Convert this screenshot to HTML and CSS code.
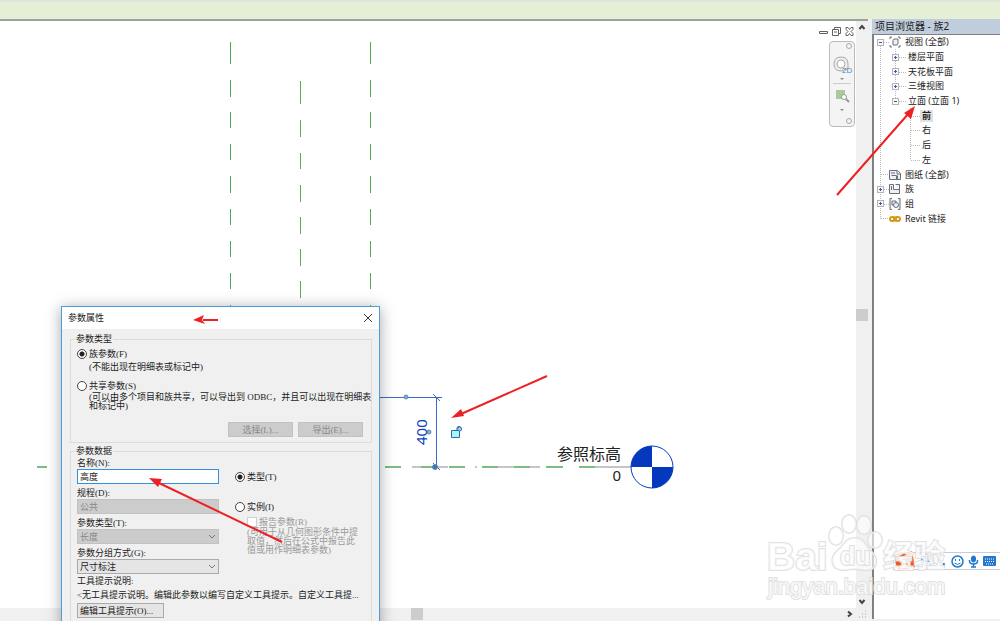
FILE: index.html
```html
<!DOCTYPE html>
<html lang="zh-CN">
<head>
<meta charset="utf-8">
<title>参数属性</title>
<link rel="stylesheet" href="styles.css">
</head>
<body>
<div class="app">
  <header class="ribbon"></header>
  <div class="main">
    <main class="workspace">
      <section class="canvas">
        <svg class="drawing" aria-label="前立面">
          <g class="ref-plane">
            <path d="M230.500 21v22M230.500 59v17M230.500 91v16M230.500 123v16M230.500 155v17M230.500 188v16M230.500 220v16M230.500 252v16M230.500 284v16"/>
            <path d="M370.500 21v22M370.500 59v17M370.500 91v16M370.500 123v16M370.500 155v17M370.500 188v16M370.500 220v16M370.500 252v16M370.500 284v16"/>
            <path d="M300.500 60v23M300.500 99v17M300.500 132v16M300.500 164v17M300.500 196v17M300.500 228v17M300.500 260v17"/>
          </g>
          <path d="M412 446h36M475 446h2M498 446h42M594 446h37" stroke="#8b8b8b"/>
          <path d="M37 446h10M385 446h16M421 446h12M449 446h16M482 446h16M514 446h16M546 446h17M579 446h16" stroke="#7dbb80" stroke-width="2"/>
          <g stroke="#3f68cc" fill="none">
            <path d="M380 376.500h62M436.500 376v72M433 373l7 7M433 442l7 7"/>
            <g fill="#83abe0" stroke="#6387b4"><circle cx="406" cy="376" r="2"/><circle cx="429" cy="411" r="2"/><circle cx="435" cy="446" r="2.500" fill="#3f75ad"/></g>
            <path d="M451.500 409.500h8v7h-8z" fill="#aaf5f6" stroke="#286da5"/><path d="M457 409v-2q0-2 3-1.500q2 1 1 4" stroke="#286da5"/><circle cx="459.500" cy="408" r="2" fill="#a9d7ed"/>
          </g>
          <text class="dimension" transform="translate(427 424) rotate(-90)">400</text>
          <text class="level" x="621" y="439" text-anchor="end">参照标高</text>
          <text class="level-value" x="621" y="460" text-anchor="end">0</text>
          <circle cx="652" cy="446" r="21" fill="#fff" stroke="#0b3fc1"/>
          <path d="M652 446V425A21 21 0 0 0 631 446ZM652 446V467A21 21 0 0 0 673 446Z" fill="#0439bd"/>
        </svg>
        <div class="view-tools">
          <div class="window-buttons">
            <button aria-label="最小化"><svg width="11" height="11"><path d="M1.500 5.500h8v2h-8z"/></svg></button>
            <button aria-label="还原"><svg width="11" height="11"><path d="M3.500 3V1.500h6v6H8M1.500 3.500h6v6h-6zM3 6h3"/></svg></button>
            <button aria-label="关闭"><svg width="11" height="11"><path d="M2 1.500h2l1.500 2L7 1.500h2v2l-2 2 2 2v2H7l-1.500-2-1.500 2H2v-2l2-2-2-2z"/></svg></button>
          </div>
          <div class="nav-bar">
            <svg width="24" height="84">
              <g fill="none" stroke="#aaa"><circle cx="19" cy="4" r="2.500"/><circle cx="19" cy="79" r="2.500"/>
              <path d="M11 15q-7 0-7 7t7 7q3 0 4-2h3v-5q0-7-7-7z" fill="#eee"/><circle cx="11" cy="22" r="4" fill="#fff"/><path d="M3 41.500h18" stroke="#ccc"/></g>
              <text class="nav-label" x="12" y="31">2D</text>
              <path d="M10 36h4l-2 2zM10 67h4l-2 2z" fill="#888"/>
              <path d="M6 48h9v9H6z" fill="#a7cb9f"/><circle cx="14" cy="55" r="2.500" fill="#fff" stroke="#999"/><path d="m16 57 3 3" stroke="#999" stroke-width="2"/>
            </svg>
          </div>
        </div>
      </section>
      <div class="scroll-y">
        <svg width="12" height="12"><path d="m3.500 8 2.500-3 2.500 3"/></svg>
        <div class="thumb"></div>
        <svg width="12" height="12"><path d="m3.500 4 2.500 3 2.500-3"/></svg>
      </div>
      <div class="scroll-x">
        <div class="thumb"></div>
        <svg width="12" height="12"><path d="m4 3.500 3 2.500-3 2.500"/></svg>
      </div>
      <div class="grip"><svg width="12" height="12"><path d="M9 3h1M6 6h1M9 6h1M3 9h1M6 9h1M9 9h1"/></svg></div>
    </main>

    <aside class="browser">
      <h2 class="browser-title">项目浏览器 - 族2</h2>
      <div class="tree-pane">
        <svg class="tree-lines"><path d="M6.500 11v173M10 7.500h5M21.500 14v49M25 22.500h7M25 37.500h7M25 51.500h7M25 66.500h7M36.500 73v52M37 81.500h10M37 95.500h10M37 110.500h10M37 125.500h10M7 139.500h7M10 154.500h5M10 169.500h5M7 183.500h7"/></svg>
        <ul class="tree">
          <li class="root"><button class="toggle" aria-label="折叠"></button><svg class="icon" width="12" height="12"><path d="M1 3V1h2M9 1h2v2M1 9v2h2M9 11h2V9M4 4.500l1-1.500h4v5l-1 1H4z"/></svg>视图 (全部)</li>
          <li class="branch"><button class="toggle plus" aria-label="展开"></button>楼层平面</li>
          <li class="branch"><button class="toggle plus" aria-label="展开"></button>天花板平面</li>
          <li class="branch"><button class="toggle plus" aria-label="展开"></button>三维视图</li>
          <li class="branch"><button class="toggle" aria-label="折叠"></button>立面 (立面 1)</li>
          <li class="leaf"><span class="current">前</span></li>
          <li class="leaf"><span>右</span></li>
          <li class="leaf"><span>后</span></li>
          <li class="leaf"><span>左</span></li>
          <li class="root"><span class="no-toggle"></span><svg class="icon" width="12" height="12"><path d="M.5 1.500h8l3 3v6H.5zM8 2v3h3M2 4h4M2.500 6.500h5v4M8.500 6.500v4"/></svg>图纸 (全部)</li>
          <li class="root"><button class="toggle plus" aria-label="展开"></button><svg class="icon" width="12" height="12"><path d="M.5 1.500h4v5h6v4H.5zM6.500 1.500h4v9M2.500 3v4"/></svg>族</li>
          <li class="root"><button class="toggle plus" aria-label="展开"></button><svg class="icon" width="12" height="12"><path d="M3 .5H1v11h2M9 .5h2v11H9M3 3h4v4H3z"/><circle cx="7" cy="7" r="2.500"/></svg>组</li>
          <li class="root"><span class="no-toggle"></span><svg class="icon link" width="12" height="12"><rect x="1" y="4" width="5" height="4" rx="2"/><rect x="6" y="4" width="5" height="4" rx="2"/><path d="M4 6h4"/></svg>Revit 链接</li>
        </ul>
      </div>
    </aside>
  </div>

  <form class="dialog" role="dialog" aria-labelledby="dialog-title">
    <div class="dialog-title"><h1 id="dialog-title">参数属性</h1><button type="button" aria-label="关闭"><svg width="10" height="10"><path d="m1 1 8 8M9 1 1 9"/></svg></button></div>
    <div class="dialog-body">
      <fieldset class="type-group">
        <legend>参数类型</legend>
        <label class="choice"><input type="radio" name="kind" checked>族参数(F)</label>
        <p class="note">(不能出现在明细表或标记中)</p>
        <label class="choice shared"><input type="radio" name="kind">共享参数(S)</label>
        <p class="note tight">(可以由多个项目和族共享，可以导出到 ODBC，并且可以出现在明细表<br>和标记中)</p>
        <div class="actions"><button type="button" disabled>选择(L)...</button><button type="button" disabled>导出(E)...</button></div>
      </fieldset>
      <fieldset class="data-group">
        <legend>参数数据</legend>
        <div class="columns">
          <div class="fields">
            <div class="field"><label for="name">名称(N):</label><input id="name" type="text" value="高度"></div>
            <div class="field"><label for="discipline">规程(D):</label><select id="discipline" disabled><option>公共</option></select></div>
            <div class="field"><label for="ptype">参数类型(T):</label><div class="select-wrap"><select id="ptype" disabled><option>长度</option></select><svg width="8" height="6"><path d="m1 1 3 3 3-3"/></svg></div></div>
            <div class="field"><label for="group">参数分组方式(G):</label><div class="select-wrap"><select id="group"><option>尺寸标注</option></select><svg width="8" height="6"><path d="m1 1 3 3 3-3"/></svg></div></div>
          </div>
          <div class="scope">
            <label class="choice"><input type="radio" name="scope" checked>类型(T)</label>
            <label class="choice instance"><input type="radio" name="scope">实例(I)</label>
            <div class="report">
              <label class="choice"><input type="checkbox" disabled>报告参数(R)</label>
              <p>(可用于从几何图形条件中提<br>取值，然后在公式中报告此<br>值或用作明细表参数)</p>
            </div>
          </div>
        </div>
        <p class="tip">工具提示说明:</p>
        <p class="tip">&lt;无工具提示说明。编辑此参数以编写自定义工具提示。自定义工具提...</p>
        <button type="button" class="edit-tip">编辑工具提示(O)...</button>
      </fieldset>
    </div>
  </form>

  <div class="ime">
    <svg class="ime-logo" width="22" height="22"><path d="m1 4 17-3 3 16-16 4q-5-8-4-17z" fill="#f35820"/><path d="M16 6 7 8v3l8 1v4l-9 1" fill="none" stroke="#fff" stroke-width="3"/></svg>
    <button aria-label="中文">中</button>
    <button aria-label="标点">•,</button>
    <button aria-label="表情"><svg width="13" height="13" fill="none" stroke="#2079ce"><circle cx="6.500" cy="6.500" r="5.500" stroke-width="1.500"/><path d="M4.500 4v2M8.500 4v2M3.500 8q3 3 6 0"/></svg></button>
    <button aria-label="语音"><svg width="11" height="13" fill="none" stroke="#2079ce"><rect x="3.500" y="1" width="4" height="6" rx="2" fill="#2079ce"/><path d="M1.500 5v1q0 3 4 3t4-3V5M5.500 9v3M3 12h5" stroke-width="1.500"/></svg></button>
    <button aria-label="键盘"><svg width="13" height="10"><rect width="13" height="10" rx="1" fill="#2079ce"/><path d="M2 3h9M2 5.500h9M3 8h7" stroke="#fff" stroke-dasharray="1 1"/></svg></button>
  </div>

  <svg class="overlay" aria-hidden="true">
    <g class="arrows">
      <path d="M837 195 909 113M547 376 461 414M218 320H203M282 542 159 483"/>
      <path class="heads" d="m915 106-4 13-7-6zM451 418l10-9 3 7zM193 320l11-5-2 5 3 4zM149 478l13 1-4 8z"/>
    </g>
    <g class="watermark">
      <text class="wm-latin" x="767" y="570">Bai</text>
      <ellipse cx="836" cy="536" rx="7" ry="9"/><ellipse cx="849" cy="524" rx="7" ry="9"/><ellipse cx="864" cy="525" rx="7" ry="9"/><ellipse cx="875" cy="540" rx="7" ry="8"/>
      <path d="M855 538c8 0 10 7 16 13 8 7 7 19-4 19-6 0-8-1-12-1s-7 1-12 1c-12 0-14-12-5-20 7-6 8-12 17-12z"/>
      <text class="wm-du" x="840" y="565">du</text>
      <text class="wm-cjk" x="883" y="567">经验</text>
      <text class="wm-url" x="768" y="594">jingyan.baidu.com</text>
    </g>
  </svg>
</div>
</body>
</html>
```

FILE: styles.css
```css
* { box-sizing: border-box; }
body { margin: 0; background: #f0f0f0; }
body, button, input, select { font: 9px/12px "Liberation Serif", "Noto Sans CJK SC", sans-serif; color: #222; }
button, input, select, p, h1, h2, ul, fieldset, legend { margin: 0; padding: 0; }
button { border: 0; background: none; }

.app { position: relative; display: flex; flex-direction: column; height: 100vh; overflow: hidden; }
.ribbon { flex: none; height: 19px; background: #e4efd6; border-top: 2px solid #dde6dc; }
.main { flex: 1; min-height: 0; display: flex; gap: 4px; }

.workspace { flex: 1; min-width: 0; display: grid; grid-template: minmax(0, 1fr) 13px / minmax(0, 1fr) 12px; border-top: 2px solid #a0a0a0; }
.canvas { position: relative; overflow: hidden; background: #fff; }
.drawing { position: absolute; inset: 0; width: 100%; height: 100%; }
.ref-plane { stroke: #4fae54; }
.dimension, .level, .level-value { font-family: "Noto Sans", "Noto Sans CJK SC", sans-serif; fill: #222; }
.dimension { font-size: 15px; fill: #0b3fc1; }
.level { font-size: 16px; }
.level-value { font-size: 15px; }
.view-tools { position: absolute; top: 4px; right: 1px; display: flex; flex-direction: column; align-items: flex-end; gap: 4px; }
.window-buttons { display: flex; gap: 2px; }
.window-buttons button { width: 11px; height: 12px; }
.window-buttons svg { display: block; fill: none; stroke: #606060; }
.nav-bar { border: 1px solid #bbb; border-radius: 4px; background: #f4f4f4; }
.nav-bar svg { display: block; }
.nav-label { font: 8px "Liberation Sans", sans-serif; fill: #428ac5; }
.scroll-y, .scroll-x { display: flex; justify-content: space-between; background: #f0f0f0; }
.scroll-y { flex-direction: column; align-items: center; }
.scroll-y svg, .scroll-x svg { flex: none; fill: none; stroke: #444; stroke-width: 2; }
.thumb { width: 12px; height: 12px; background: #cdcdcd; }
.scroll-x .thumb { margin-left: 48%; }
.grip { background: #f0f0f0; }
.grip svg { display: block; stroke: #aaa; }

.browser { flex: none; width: 128px; display: flex; flex-direction: column; padding-bottom: 2px; }
.browser-title { height: 15px; padding-left: 3px; background: #bfcddd; font: 10px/14px "Noto Sans", "Noto Sans CJK SC", sans-serif; }
.tree-pane { position: relative; flex: 1; background: #fff; border-left: 2px solid #808080; border-top: 1px solid #808080; font-family: "Noto Sans", "Noto Sans CJK SC", sans-serif; }
.tree-lines { position: absolute; left: 0; top: 0; width: 50px; height: 191px; stroke: #bbb; stroke-dasharray: 1 1; fill: none; }
.tree { position: relative; display: grid; grid-template-rows: repeat(13, 1fr); height: 191px; list-style: none; white-space: nowrap; }
.tree li { display: flex; align-items: center; padding-left: 3px; }
.tree .branch { padding-left: 18px; gap: 9px; }
.tree .leaf { padding-left: 46px; }
.leaf span { padding: 0 2px; }
.leaf .current { background: #e1e1e1; font-weight: bold; }
.toggle, .no-toggle { flex: none; width: 7px; height: 7px; }
.toggle { border: 1px solid #b4b4b4; background: linear-gradient(#3e59a4, #3e59a4) center / 3px 1px no-repeat #f8f8f8; }
.toggle.plus { background: linear-gradient(#3e59a4, #3e59a4) center / 3px 1px no-repeat, linear-gradient(#3e59a4, #3e59a4) center / 1px 3px no-repeat #f8f8f8; }
.icon { flex: none; margin: 0 4px 0 5px; fill: #eef0f3; stroke: #69717b; }
.icon.link { fill: none; stroke: #d69a16; stroke-width: 2; }

.dialog { position: absolute; left: 61px; top: 306px; width: 319px; border: 1px solid #4a9ee0; background: #f0f0f0; box-shadow: 0 2px 14px rgba(0, 0, 0, .35); white-space: nowrap; }
.dialog-title { display: flex; align-items: center; justify-content: space-between; height: 22px; padding: 0 6px; background: #fff; }
.dialog-title h1 { font: 9px/12px "Noto Sans CJK SC", sans-serif; }
.dialog-title button { height: 10px; }
.dialog-title svg { display: block; stroke: #333; }
.dialog-body { display: flex; flex-direction: column; gap: 3px; padding: 5px 7px 20px 8px; }
fieldset { min-width: 0; border: 1px solid #dcdcdc; }
legend { padding: 0 1px; line-height: 10px; }
.type-group { padding: 4px 8px 5px 6px; }
.type-group legend, .data-group legend { margin-left: -2px; }
.choice { display: flex; align-items: center; height: 12px; gap: 2px; }
input[type="radio"] { appearance: none; width: 10px; height: 10px; border: 1px solid #444; border-radius: 50%; background: #fff; }
input[type="radio"]:checked { background: radial-gradient(circle, #222 2px, #fff 3px); }
input[type="checkbox"] { appearance: none; width: 10px; height: 10px; border: 1px solid #d0d0d0; background: #fff; }
.note { margin: 1px 0 0 12px; }
.choice.shared { margin-top: 7px; }
.note.tight { line-height: 9px; }
.actions { display: flex; justify-content: flex-end; gap: 5px; margin-top: 11px; }
.actions button { width: 65px; height: 15px; background: #ccc; border: 1px solid #c2c2c2; color: #888; line-height: 12px; }
.data-group { padding: 1px 8px 20px 6px; }
.columns { display: flex; gap: 16px; }
.fields { width: 142px; display: flex; flex-direction: column; gap: 3px; }
.field label { display: block; height: 12px; }
.field input, .field select { display: block; width: 100%; height: 15px; padding: 0 2px; border: 1px solid #aaa; border-radius: 0; line-height: 12px; }
.field input { border-color: #3390e0; background: #fff; }
.field select { appearance: none; background: #e5e5e5; }
.field select:disabled { background: #ccc; border-color: #c2c2c2; color: #888; opacity: 1; }
.select-wrap { position: relative; }
.select-wrap svg { position: absolute; right: 3px; top: 5px; fill: none; stroke: #777; pointer-events: none; }
.scope { padding-top: 14px; }
.choice.instance { margin-top: 18px; }
.report { margin: 3px 0 0 12px; color: #999; }
.report p { line-height: 9px; }
.tip { margin-top: 1px; line-height: 13px; }
.edit-tip { width: 87px; height: 15px; margin-top: 1px; padding-left: 2px; border: 1px solid #aaa; background: #e5e5e5; line-height: 12px; text-align: left; }

.ime { position: absolute; right: 0; bottom: 51px; display: flex; align-items: center; gap: 4px; height: 18px; padding-right: 4px; border: 1px solid #c9cbdd; border-right: 0; background: #fff; }
.ime button { min-width: 11px; color: #2079ce; font: bold 12px/14px "Liberation Sans", "Noto Sans CJK SC", sans-serif; }
.ime button svg { display: block; }
.overlay { position: absolute; inset: 0; width: 100%; height: 100%; pointer-events: none; }
.arrows { fill: none; stroke: #ed2024; stroke-width: 2; }
.arrows .heads { fill: #ed2024; stroke: none; }
.watermark { fill: #fff; fill-opacity: .6; stroke: #ddd; stroke-opacity: .9; stroke-width: 2px; paint-order: stroke; font-family: "Liberation Sans", "Noto Sans CJK SC", sans-serif; }
.wm-latin { font-size: 39px; font-weight: bold; }
.wm-du { font-size: 25px; font-weight: bold; }
.wm-cjk { font-size: 31px; font-weight: bold; }
.wm-url { font-size: 22px; }
.wm-latin, .wm-du, .wm-cjk, .wm-url { fill-opacity: .8; }
```
